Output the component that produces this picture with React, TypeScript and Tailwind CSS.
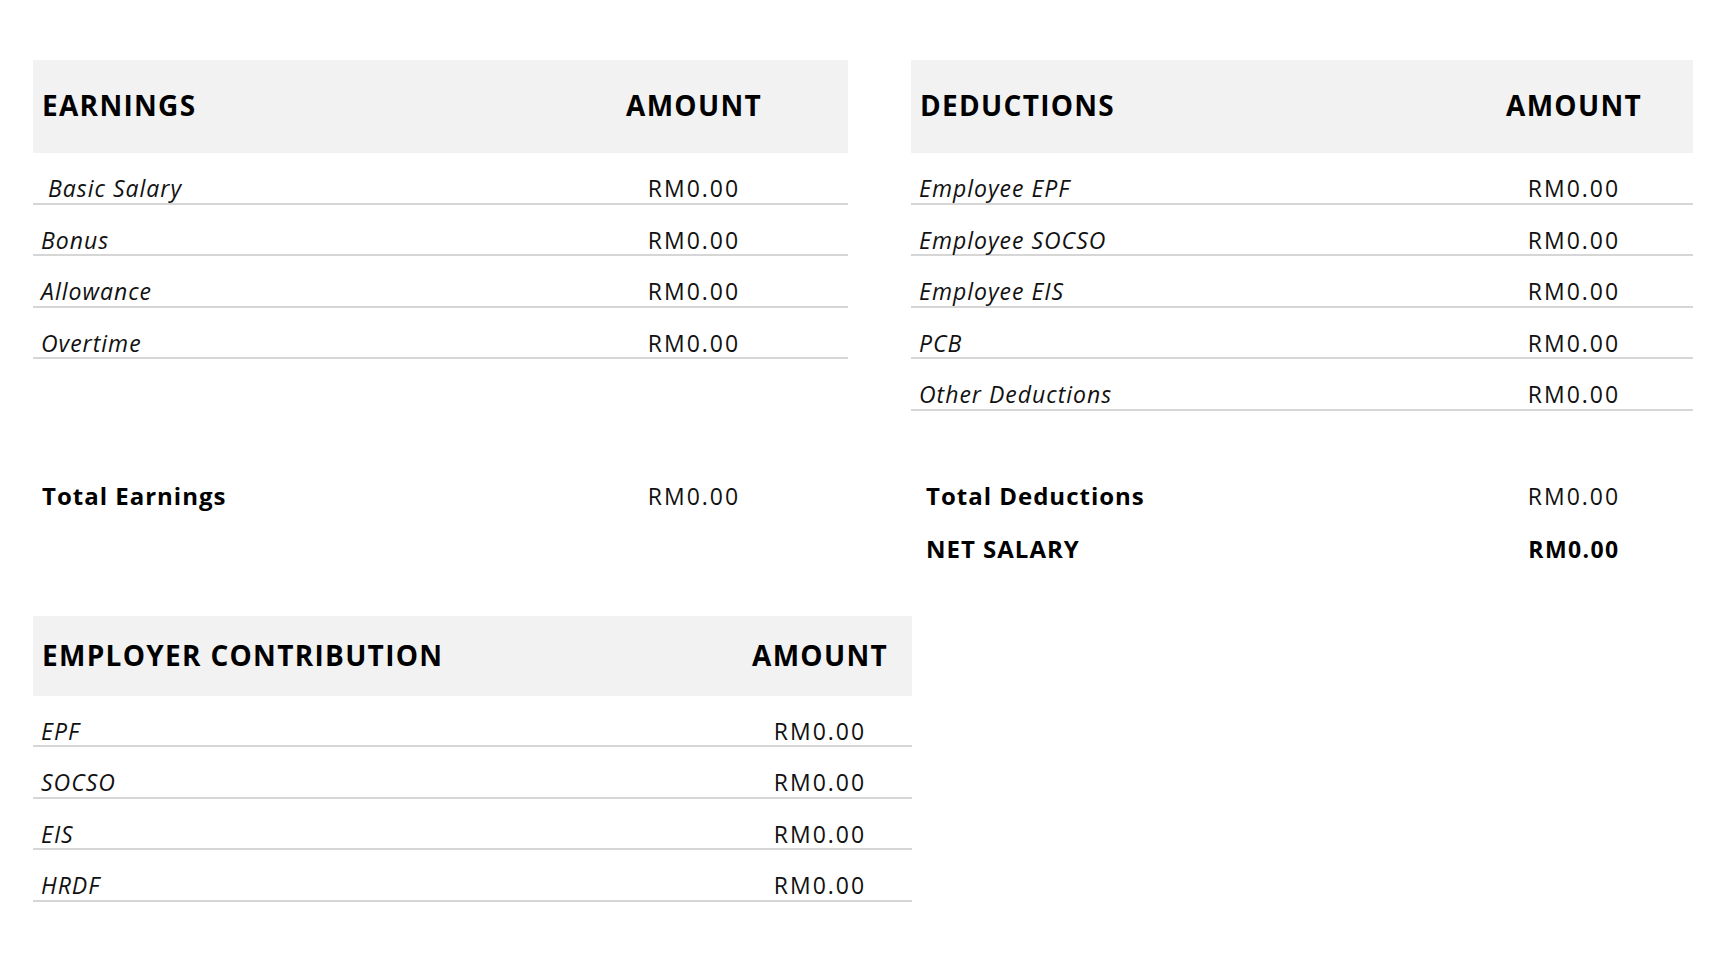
import React from 'react';

type Line = { label: string; amount: string };

const earnings: Line[] = [
    { label: '\u00a0Basic Salary', amount: 'RM0.00' },
    { label: 'Bonus', amount: 'RM0.00' },
    { label: 'Allowance', amount: 'RM0.00' },
    { label: 'Overtime', amount: 'RM0.00' },
];

const deductions: Line[] = [
    { label: 'Employee EPF', amount: 'RM0.00' },
    { label: 'Employee SOCSO', amount: 'RM0.00' },
    { label: 'Employee EIS', amount: 'RM0.00' },
    { label: 'PCB', amount: 'RM0.00' },
    { label: 'Other Deductions', amount: 'RM0.00' },
];

const employer: Line[] = [
    { label: 'EPF', amount: 'RM0.00' },
    { label: 'SOCSO', amount: 'RM0.00' },
    { label: 'EIS', amount: 'RM0.00' },
    { label: 'HRDF', amount: 'RM0.00' },
];

function Table({
    title,
    rows,
    amountWidth,
    headerHeight,
}: {
    title: string;
    rows: Line[];
    amountWidth: string;
    headerHeight: 'tall' | 'short';
}) {
    return (
        <div className="flex flex-col">
            {/* Grey header band */}
            <div
                className={
                    headerHeight === 'tall'
                        ? 'flex h-[93px] pt-[28px] bg-[#f2f2f2] text-[28px] leading-[34px] font-bold tracking-[1.3px] text-black'
                        : 'flex h-[80px] pt-[22px] bg-[#f2f2f2] text-[28px] leading-[34px] font-bold tracking-[1.3px] text-black'
                }
            >
                <div className="flex-1 pl-[9px]">{title}</div>
                <div className={`${amountWidth} text-center`}>AMOUNT</div>
            </div>

            {rows.map((row) => (
                <div
                    key={row.label}
                    className="flex h-[51.6px] pt-[21px] border-b-2 border-[#d6d6d6] text-[23px] leading-[28px] text-[#111]"
                >
                    <div className="flex-1 pl-[8px] italic whitespace-pre tracking-[1px]">{row.label}</div>
                    <div className={`${amountWidth} text-center tracking-[2px]`}>{row.amount}</div>
                </div>
            ))}
        </div>
    );
}

function TotalRow({
    label,
    amount,
    amountWidth,
    strongAmount = false,
    indent = 'pl-[9px]',
}: {
    label: string;
    amount: string;
    amountWidth: string;
    strongAmount?: boolean;
    indent?: string;
}) {
    return (
        <div className="flex items-baseline h-[53.3px] pt-[10px] text-black">
            <div className={`flex-1 ${indent} text-[24px] leading-[34px] font-bold tracking-[1px]`}>{label}</div>
            <div
                className={`${amountWidth} text-center text-[23px] leading-[28px] ${
                    strongAmount ? 'font-bold tracking-[1.4px]' : 'text-[#111] tracking-[2px]'
                }`}
            >
                {amount}
            </div>
        </div>
    );
}

export default function App() {
    return (
        <div className="min-h-screen bg-white pt-[60px] pl-[33px] font-['Open_Sans','Noto_Sans',sans-serif]">
            {/* Earnings / Deductions */}
            <div className="grid grid-cols-[815px_782px] gap-x-[63px] gap-y-[58px] items-start">
                <Table title="EARNINGS" rows={earnings} amountWidth="w-[308px]" headerHeight="tall" />
                <Table title="DEDUCTIONS" rows={deductions} amountWidth="w-[238px]" headerHeight="tall" />

                <div>
                    <TotalRow label="Total Earnings" amount="RM0.00" amountWidth="w-[308px]" />
                </div>
                <div>
                    <TotalRow label="Total Deductions" amount="RM0.00" amountWidth="w-[238px]" indent="pl-[15px]" />
                    <TotalRow label="NET SALARY" amount="RM0.00" amountWidth="w-[238px]" indent="pl-[15px]" strongAmount />
                </div>
            </div>

            {/* Employer contribution */}
            <div className="w-[879px] mt-[40px]">
                <Table title="EMPLOYER CONTRIBUTION" rows={employer} amountWidth="w-[184px]" headerHeight="short" />
            </div>
        </div>
    );
}
